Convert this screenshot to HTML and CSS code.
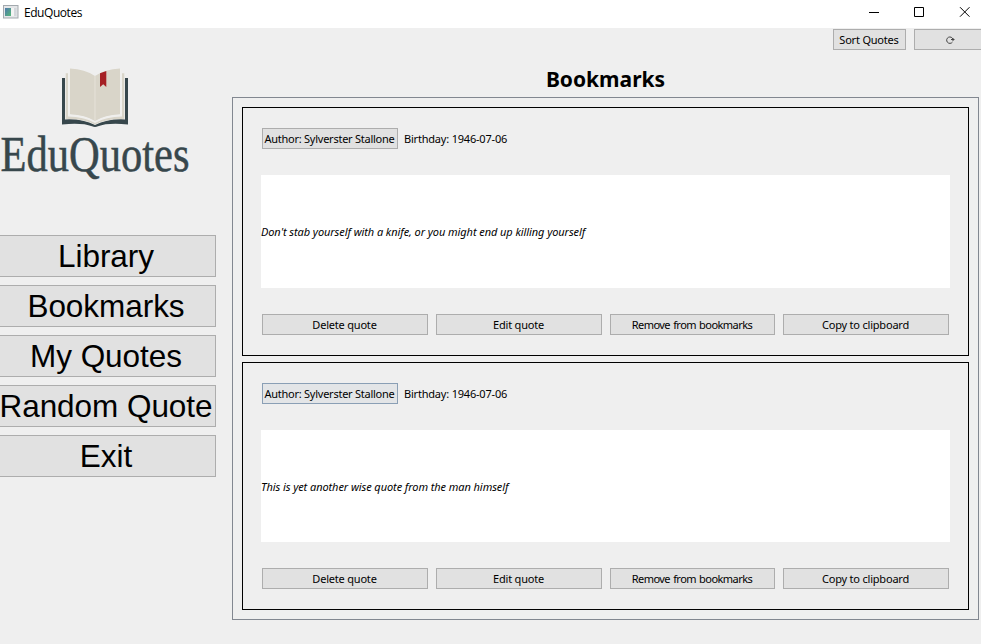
FILE: index.html
```html
<!DOCTYPE html>
<html lang="en">
<head>
<meta charset="utf-8">
<title>EduQuotes</title>
<link rel="stylesheet" href="styles.css">
</head>
<body>
<header class="titlebar">
  <svg class="app-icon" width="16" height="14" viewBox="0 0 16 14">
    <defs><linearGradient id="g" x1="0" y1="0" x2="1" y2="1"><stop offset="0" stop-color="#4f78ad"/><stop offset="1" stop-color="#55b878"/></linearGradient></defs>
    <rect x=".5" y=".5" width="14.5" height="12.5" fill="#e4e6e8" stroke="#a3a9ae"/>
    <rect x="2" y="3" width="6" height="8" fill="url(#g)"/>
    <rect x="8" y="3" width="3" height="8" fill="#f3f3f3"/>
    <rect x="11" y="3" width="2.500" height="8" fill="#d3d7db"/>
  </svg>
  <span class="app-name">EduQuotes</span>
  <svg class="controls" width="102" height="12" viewBox="0 0 102 12" fill="none" stroke="#000">
    <path d="M0 6.500H10M45.500 1.500H54.500V10.500H45.500Z"/>
    <path d="M91 1.200L100.500 10.700M100.500 1.200L91 10.700"/>
  </svg>
</header>
<div class="window">
  <aside class="sidebar">
    <svg class="logo" width="200" height="130" viewBox="0 0 200 130">
      <path fill="#37474c" d="M62 14H65V55.500Q82 54.500 95 61Q108 54.500 125 55.500V14H128V60.500Q108 58.500 98 62.300Q95 63.500 92 62.300Q82 58.500 62 60.500Z"/>
      <path fill="#d9d5c9" d="M65.700 9.200H68V52.500Q84 52.500 95 59Q106 52.500 122 52.500V9.200H124.300V55Q106 54.500 95 60.500Q84 54.500 65.700 55Z"/>
      <path fill="#d9d5c9" d="M70 4.500Q85 5.200 95 12Q105 5.200 120 4.500V50.300Q105 51 95 57Q85 51 70 50.300Z"/>
      <path fill="none" stroke="#f1f0ec" d="M69 5V51.200Q85 51.700 95 58Q105 51.700 121 51.200V5"/>
      <path fill="none" stroke="#e6e2d9" d="M95 12V57"/>
      <path fill="#a52024" d="M100 9.200L106.300 7V23L103.200 20.200L100 23Z"/>
      <text class="logo-text" x="0.500" y="106.700" textLength="189" lengthAdjust="spacingAndGlyphs">EduQuotes</text>
    </svg>
    <nav class="menu">
      <button>Library</button>
      <button>Bookmarks</button>
      <button>My Quotes</button>
      <button>Random Quote</button>
      <button>Exit</button>
    </nav>
  </aside>
  <main class="content">
    <div class="toolbar">
      <button class="btn">Sort Quotes</button>
      <button class="btn"><svg width="10" height="10" viewBox="0 0 10 10" fill="none" stroke="#444"><path d="M7.500 7A3.200 3.200 0 1 1 8 4.500M6 4.500H9.500M8 6V3"/></svg></button>
    </div>
    <h1>Bookmarks</h1>
    <section class="panel">
      <article class="card">
        <div class="meta"><button class="btn author">Author: Sylverster Stallone</button><span>Birthday: 1946-07-06</span></div>
        <p class="quote"><span>Don't stab yourself with a knife, or you might end up killing yourself</span></p>
        <div class="actions"><button class="btn">Delete quote</button><button class="btn">Edit quote</button><button class="btn tight">Remove from bookmarks</button><button class="btn">Copy to clipboard</button></div>
      </article>
      <article class="card second">
        <div class="meta"><button class="btn author hot">Author: Sylverster Stallone</button><span>Birthday: 1946-07-06</span></div>
        <p class="quote"><span>This is yet another wise quote from the man himself</span></p>
        <div class="actions"><button class="btn">Delete quote</button><button class="btn">Edit quote</button><button class="btn tight">Remove from bookmarks</button><button class="btn">Copy to clipboard</button></div>
      </article>
    </section>
  </main>
</div>
</body>
</html>
```
FILE: styles.css
```css
* { box-sizing: border-box; }
body { margin: 0; width: 981px; height: 644px; overflow: hidden; background: #efefef; color: #000; font: 11px/13px "Noto Sans", sans-serif; letter-spacing: -0.2px; }
button { font: inherit; letter-spacing: inherit; color: #000; background: #e1e1e1; border: 1px solid #adadad; padding: 0; white-space: nowrap; }
.titlebar { height: 28px; background: #fff; display: flex; padding: 0 10px 0 3px; }
.app-icon { margin-top: 5px; }
.app-name { margin: 5px auto 0 5px; font: 12px/16px "Open Sans", sans-serif; letter-spacing: -0.45px; }
.controls { margin-top: 6px; }
.window { display: flex; height: 616px; }
.sidebar { width: 232px; flex: none; padding-top: 36px; }
.logo { display: block; }
.logo-text { font: 50px "Liberation Serif", serif; letter-spacing: 0; fill: #37474c; stroke: #37474c; stroke-width: .5px; }
.menu { display: flex; flex-direction: column; gap: 8px; width: 220px; margin: 41px 0 0 -4px; }
.menu button { height: 42px; font: 31.5px/40px "Liberation Sans", sans-serif; letter-spacing: -0.05px; }
.content { flex: none; width: 755px; }
.toolbar { display: flex; justify-content: flex-end; gap: 8px; padding-top: 1px; }
.btn { height: 21px; line-height: 19px; padding-right: 1px; }
.toolbar .btn { width: 73px; }
.toolbar svg { display: block; margin: 1px auto 0; }
h1 { margin: 16px 0 5px; width: 747px; text-align: center; font: bold 21px/26px "Noto Sans", sans-serif; letter-spacing: 0; }
.panel { width: 747px; height: 523px; border: 1px solid #828790; padding: 9px; display: flex; flex-direction: column; gap: 6px; }
.card { height: 249px; border: 1px solid #000; padding: 20px 18px; }
.second { height: 248px; }
.meta { display: flex; align-items: center; gap: 6px; padding-left: 1px; }
.author { width: 136px; letter-spacing: -0.25px; }
.tight { letter-spacing: -0.55px; letter-spacing: -0.55px; word-spacing: .8px; }
.hot { border-color: #8a9fb5; background: #e3e5e7; }
.quote { margin: 26px 0; height: 113px; width: 689px; background: #fff; display: flex; align-items: center; font-style: italic; letter-spacing: -.08px; white-space: nowrap; }
.second .quote { height: 112px; }
.actions { display: grid; grid-template-columns: 166px 166px 165px 166px; gap: 8px; padding-left: 1px; }
```
